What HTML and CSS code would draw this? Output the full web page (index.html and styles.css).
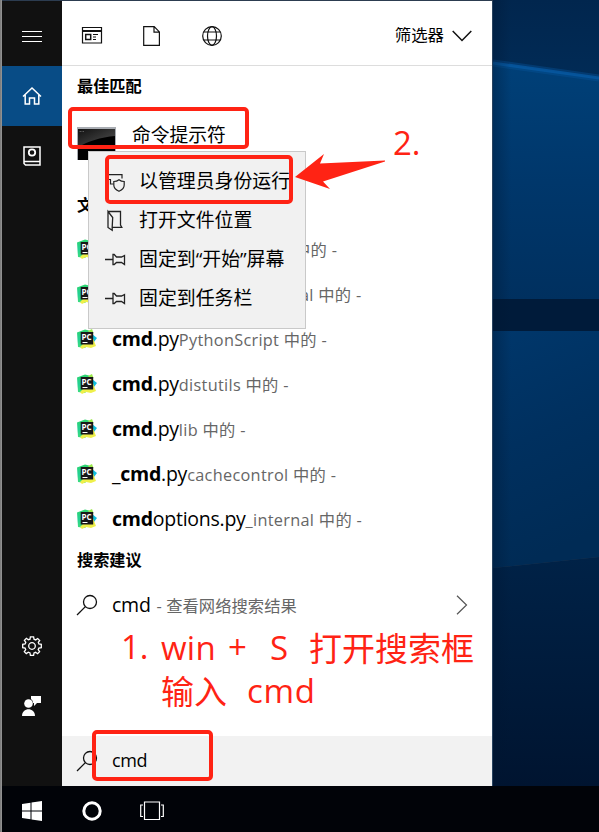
FILE: index.html
```html
<!DOCTYPE html>
<html lang="zh-CN">
<head>
<meta charset="utf-8">
<title>cmd</title>
<link rel="stylesheet" href="styles.css">
</head>
<body>
<svg class="defs" width="0" height="0" aria-hidden="true">
  <defs>
    <linearGradient id="pcg" x1="0" y1="0" x2="0" y2="1"><stop offset="0" stop-color="#2fd66f"/><stop offset=".5" stop-color="#22d093"/><stop offset="1" stop-color="#3fdd7c"/></linearGradient>
    <g id="pc">
      <path d="M0 3.500L8 .500l4 1 2 2v9l-6 6.500-7-1z" fill="url(#pcg)"/>
      <path d="M11 2l4-2 1.500 4-2 2z" fill="#9be84b"/>
      <path d="M15 5l5 4-3 4-3-2z" fill="#12bfe0"/>
      <path d="M15.500 8l3.500 9-5 2-5-1-4 2-2-2 3-3h9z" fill="#eff04a"/>
      <path d="M3.700 3h12.500v12.500H3.700z" fill="#181818"/>
    </g>
    <g id="pin" fill="none" stroke="#222" stroke-width="1.300"><path d="M0 11.500h8M8 6.500h1.200L11.500 9h5l3-1.500v9L16.500 14.500h-5L9.200 16.500H8z"/></g>
    <g id="lens" fill="none" stroke="#111" stroke-width="1.300"><circle cx="13" cy="7" r="6.500"/><path d="M8.400 11.600L0 20"/></g>
  </defs>
</svg>
<div class="desktop">
  <svg class="wall" viewBox="0 0 106 786" preserveAspectRatio="none">
    <defs>
      <linearGradient id="w1" x1="0" y1="0" x2="0" y2="1"><stop offset="0" stop-color="#01264e"/><stop offset="1" stop-color="#012b56"/></linearGradient>
      <linearGradient id="w2" x1="0" y1="0" x2="0" y2="1"><stop offset="0" stop-color="#004078"/><stop offset=".5" stop-color="#00376b"/><stop offset="1" stop-color="#00305f"/></linearGradient>
      <linearGradient id="w3" x1="0" y1="0" x2=".2" y2="1"><stop offset="0" stop-color="#00376b"/><stop offset=".5" stop-color="#00305f"/><stop offset="1" stop-color="#002b55"/></linearGradient>
      <linearGradient id="w4" x1="0" y1="0" x2="0" y2="1"><stop offset="0" stop-color="#002247"/><stop offset="1" stop-color="#001430"/></linearGradient>
      <linearGradient id="w5"><stop offset="0" stop-color="#001530" stop-opacity=".35"/><stop offset="1" stop-color="#001530" stop-opacity="0"/></linearGradient>
    </defs>
    <path d="M0 0h106v80H0z" fill="url(#w1)"/>
    <path d="M0 63l106 15v222H0z" fill="url(#w2)"/>
    <path d="M0 63l106 15" stroke="#07549a" stroke-width="7" opacity=".4"/>
    <path d="M0 63l106 15" stroke="#0759a2" stroke-width="3" opacity=".8"/>
    <path d="M0 299h106v32H0z" fill="#001b3a"/>
    <path d="M0 331h106v226L0 568z" fill="url(#w3)"/>
    <path d="M0 568l106-11v229H0z" fill="url(#w4)"/>
    <path d="M0 0h18v786H0z" fill="url(#w5)"/>
  </svg>

  <nav class="rail">
    <div class="rail-item menu-btn"><svg width="20" height="12"><path d="M0 1.500h20M0 6.500h20M0 11.500h20" stroke="#fff" stroke-width="1"/></svg></div>
    <div class="rail-item active"><svg width="20" height="20" fill="none" stroke="#fff" stroke-width="1.500"><path d="M1 10.500L10 2 19 10.500M3.200 9V18H7.500V12h5v6h4.300V9"/></svg></div>
    <div class="rail-item"><svg width="18" height="20" fill="none" stroke="#fff" stroke-width="1.500"><path d="M1 1h16v18H2.500L1 17.500zM1 15.500h16"/><circle cx="9" cy="6.500" r="3.200" stroke-width="1.800"/></svg></div>
    <div class="rail-gap"></div>
    <div class="rail-item"><svg width="20" height="20" viewBox="-10 -10 20 20" fill="none" stroke="#fff" stroke-width="1.300"><path d="M-1.600-9.200H1.600L2-6.800 3.700-6.100 5.700-7.500 7.700-5.500 6.300-3.600 6.900-2 9.300-1.600V1.600L6.900 2 6.200 3.700 7.600 5.700 5.600 7.700 3.600 6.300 2 6.900 1.600 9.300H-1.600L-2 6.900-3.700 6.200-5.700 7.600-7.700 5.600-6.300 3.600-6.900 2-9.300 1.600V-1.600L-6.900-2-6.200-3.700-7.600-5.700-5.600-7.700-3.600-6.300-2-6.800z"/><circle r="3.300"/></svg></div>
    <div class="rail-item"><svg width="20" height="20" fill="#fff"><path d="M9 0h10v7h-4l-3 3V7h-1a4.600 4.600 0 0 0-2-4z"/><circle cx="6.500" cy="7.500" r="4.300"/><path d="M0 20c0-9 13-9 13 0z"/></svg></div>
    <div class="rail-end"></div>
  </nav>

  <main class="panel">
    <header class="filters">
      <svg class="f1" width="20" height="17" fill="none" stroke="#111"><path d="M.5.5h19v15.500H.500zM.5 3.500h19M.5 4.500h19" stroke-width="1.200"/><path d="M3.700 7.500h5v5h-5z" stroke-width="1.500"/><path d="M11 7.500h5M11 10h3M11 12.500h3"/></svg>
      <svg class="f2" width="17" height="20" fill="none" stroke="#111" stroke-width="1.200"><path d="M.7.700h10.500l5.200 5.200v13.400H.700zM11 .700v5.500h5.400"/></svg>
      <svg class="f3" width="20" height="20" fill="none" stroke="#111" stroke-width="1.200"><circle cx="10" cy="10" r="9.300"/><ellipse cx="10" cy="10" rx="4.500" ry="9.300"/><path d="M2 6h16M2 14h16"/></svg>
      <span class="filter-label">筛选器</span>
      <svg class="f4" width="20" height="12" fill="none" stroke="#111" stroke-width="1.500"><path d="M.7 1L10 10.500 19.300 1"/></svg>
    </header>
    <h2 class="heading">最佳匹配</h2>
    <div class="best">
      <svg width="39" height="33"><defs><linearGradient id="cg" x1="0" y1="0" x2="1" y2="1"><stop offset="0" stop-color="#111"/><stop offset="1" stop-color="#555"/></linearGradient></defs><path d="M0 0h39v33H0z" fill="#a9adb3"/><path d="M1 2h37v31H1z" fill="#000"/><path d="M1 2h37v7C24 10 10 15 1 20z" fill="url(#cg)"/><path d="M2.500 4.500h2M5.500 4.500h1.500" stroke="#777" stroke-width=".7"/></svg>
      <span class="best-name">命令提示符</span>
    </div>
    <h2 class="heading docs">文档</h2>
    <ul class="results">
      <li><svg class="pc"><use href="#pc"/><text x="4.500" y="10.500">PC</text><path d="M5.500 13.500h5" stroke="#fff"/></svg><span class="path tail-a">中的 -</span></li>
      <li><svg class="pc"><use href="#pc"/><text x="4.500" y="10.500">PC</text><path d="M5.500 13.500h5" stroke="#fff"/></svg><span class="path tail-b">al 中的 -</span></li>
      <li><svg class="pc"><use href="#pc"/><text x="4.500" y="10.500">PC</text><path d="M5.500 13.500h5" stroke="#fff"/></svg><span class="name"><b>cmd</b>.py</span><span class="path">PythonScript 中的 -</span></li>
      <li><svg class="pc"><use href="#pc"/><text x="4.500" y="10.500">PC</text><path d="M5.500 13.500h5" stroke="#fff"/></svg><span class="name"><b>cmd</b>.py</span><span class="path">distutils 中的 -</span></li>
      <li><svg class="pc"><use href="#pc"/><text x="4.500" y="10.500">PC</text><path d="M5.500 13.500h5" stroke="#fff"/></svg><span class="name"><b>cmd</b>.py</span><span class="path">lib 中的 -</span></li>
      <li><svg class="pc"><use href="#pc"/><text x="4.500" y="10.500">PC</text><path d="M5.500 13.500h5" stroke="#fff"/></svg><span class="name">_<b>cmd</b>.py</span><span class="path">cachecontrol 中的 -</span></li>
      <li><svg class="pc"><use href="#pc"/><text x="4.500" y="10.500">PC</text><path d="M5.500 13.500h5" stroke="#fff"/></svg><span class="name"><b>cmd</b>options.py</span><span class="path">_internal 中的 -</span></li>
    </ul>
    <h2 class="heading web">搜索建议</h2>
    <div class="suggest">
      <svg class="lens"><use href="#lens"/></svg><span class="name">cmd</span><span class="path hint">- 查看网络搜索结果</span>
      <svg class="chev" width="12" height="20" fill="none" stroke="#555" stroke-width="1.200"><path d="M1 .700L10.500 10 1 19.300"/></svg>
    </div>
    <div class="searchbar"><svg class="lens"><use href="#lens"/></svg><span class="query">cmd</span></div>
  </main>

  <div class="context">
    <div class="cm"><svg width="22" height="22" fill="none" stroke="#222" stroke-width="1.200"><path d="M8.500 14H5.500V9.500M0 9.500h6M.6 10V4.700H17V8.500"/><path d="M8.800 11.500c2.500 0 4-.8 5.200-1.800 1.200 1 2.800 1.800 5.200 1.800v3.500c0 3-2.200 5-5.200 6.300-3-1.300-5.200-3.300-5.200-6.300z" fill="#f1f1f1"/></svg><span>以管理员身份运行</span></div>
    <div class="cm"><svg width="22" height="22" fill="none" stroke="#222" stroke-width="1.300"><path d="M3 2.500H15.500V16l1.300 2.300H7.500M3 2.500V18.500l4.200 2.700V18l.5-9.500z"/></svg><span>打开文件位置</span></div>
    <div class="cm"><svg width="22" height="22"><use href="#pin"/></svg><span>固定到“开始”屏幕</span></div>
    <div class="cm"><svg width="22" height="22"><use href="#pin"/></svg><span>固定到任务栏</span></div>
  </div>

  <footer class="taskbar">
    <svg width="20" height="20" fill="#fff"><path d="M0 3l8.500-1.200V9.500H0zM9.500 1.500L20 0v9.500H9.500zM0 10.500h8.500v7.800L0 17zM9.500 10.500H20V20L9.500 18.500z"/></svg>
    <svg width="20" height="20" fill="none" stroke="#fff" stroke-width="3"><circle cx="10" cy="10" r="8.200"/></svg>
    <svg width="24" height="20" fill="none" stroke="#fff" stroke-width="1.200"><path d="M4.500 1h15v17.500h-15zM3 4H.700v11.500H3M21 4h2.300v11.500H21"/></svg>
  </footer>

  <div class="mark mark-best"></div>
  <div class="mark mark-admin"></div>
  <div class="mark mark-query"></div>
  <svg class="arrow" width="94" height="40"><path d="M0 23L29 0 25 9.500 90 6.500v1L28 27.500 35 35z" fill="#ff2314"/></svg>
  <span class="note n2">2.</span>
  <span class="note n1">1.</span>
  <span class="note win">win</span><span class="note plus">+</span><span class="note s">S</span><span class="note open">打开搜索框</span>
  <span class="note enter">输入</span><span class="note ncmd">cmd</span>
</div>
</body>
</html>
```
FILE: styles.css
```css
* { box-sizing: border-box; }
body { margin: 0; font-family: "Open Sans", "Noto Sans CJK SC", sans-serif; color: #000; }
svg { display: block; flex: none; overflow: visible; }
.defs { position: absolute; }
.desktop {
  position: relative; width: 599px; height: 832px; overflow: hidden; background: #2c3c50;
  display: grid; grid-template-columns: 60px 431px 106px; grid-template-rows: 785px 46px;
  padding: 1px 0 0 2px;
  white-space: nowrap;
}
.desktop::before { content: ""; position: absolute; left: 0; top: 0; width: 2px; height: 832px; background: linear-gradient(90deg, #777, #999); }
.wall { grid-column: 3; grid-row: 1; width: 106px; height: 786px; margin-top: -1px; }
.rail { grid-column: 1; grid-row: 1; background: #111; display: flex; flex-direction: column; }
.rail-item { height: 60px; display: flex; align-items: center; justify-content: center; }
.menu-btn { height: 65px; padding-top: 5px; }
.active { background: #084c86; }
.rail-gap { flex: 1; }
.rail-end { height: 50px; }
.panel { grid-column: 2; grid-row: 1; background: #fff; border-right: 1px solid #29435f; display: flex; flex-direction: column; }
.filters { height: 65px; border-bottom: 1px solid #ddd; display: flex; align-items: center; padding: 5px 20px 0 20px; }
.f2 { margin-left: 41px; }
.f3 { margin-left: 42px; }
.filter-label { margin: -2px 0 0 auto; font-size: 16.4px; line-height: 24px; }
.f4 { margin-left: 8px; }
.heading { margin: 0; padding-left: 15px; height: 41px; font-size: 16.2px; line-height: 41px; font-weight: 700; }
.best { height: 77px; display: flex; align-items: flex-start; padding: 20px 0 0 15px; }
.best-name { font-size: 18.8px; line-height: 28px; margin: -6px 0 0 16px; }
.docs { height: 42px; line-height: 42px; }
.results { list-style: none; margin: 0; padding: 0; }
.results li { height: 45px; display: flex; align-items: center; padding-left: 15px; }
.pc { width: 20px; height: 20px; margin-right: 15px; }
.pc text { font: 700 8px "Open Sans", sans-serif; fill: #fff; }
.name { font-size: 19.5px; line-height: 30px; letter-spacing: -.25px; }
.path { font-size: 16.3px; line-height: 30px; color: #666; padding-top: 2px; letter-spacing: .3px; }
.tail-a { margin-left: 182px; }
.tail-b { margin-left: 188px; }
.web { height: 39px; line-height: 39px; }
.suggest { height: 50px; display: flex; align-items: center; padding: 0 24px 0 15px; }
.lens { width: 20px; height: 20px; margin-right: 15px; }
.hint { margin-left: 6px; letter-spacing: .05px; }
.chev { margin-left: auto; }
.searchbar { height: 50px; margin-top: auto; background: #f2f2f2; display: flex; align-items: center; padding-left: 15px; }
.query { font-size: 18px; line-height: 30px; letter-spacing: -.4px; margin-top: -2px; }
.context { position: absolute; left: 88px; top: 151px; width: 218px; height: 178px; padding: 9px 0 0 16px; background: #f1f1f1; border: 1px solid #c9c9c9; }
.cm { height: 39px; display: flex; align-items: center; gap: 12px; font-size: 18.9px; line-height: 30px; }
.taskbar { grid-column: 1 / 4; grid-row: 2; background: #010308; display: flex; align-items: center; padding: 4px 0 0 20px; gap: 40px; }
.taskbar svg:last-child { margin-left: -2px; }
.mark { position: absolute; border: 4px solid #ff2314; border-radius: 5px; }
.mark-best { left: 68px; top: 107px; width: 181px; height: 42px; }
.mark-admin { left: 105px; top: 155px; width: 188px; height: 49px; }
.mark-query { left: 92px; top: 730px; width: 121px; height: 51px; }
.arrow { position: absolute; left: 295px; top: 154px; }
.note { position: absolute; color: #ff2314; font-size: 33px; line-height: 44px; }
.n2 { left: 393px; top: 121px; }
.n1 { left: 121px; top: 625px; }
.win { left: 161px; top: 626px; letter-spacing: .3px; }
.plus { left: 228px; top: 625px; }
.s { left: 270px; top: 626px; }
.open { left: 309px; top: 627px; }
.enter { left: 161px; top: 670px; }
.ncmd { left: 247px; top: 669px; letter-spacing: .7px; }
```
